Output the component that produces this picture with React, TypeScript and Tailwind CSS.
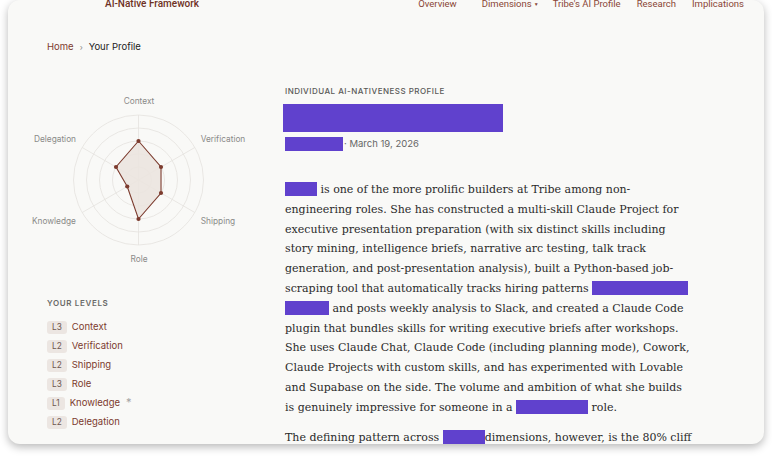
const BROWN = '#7c3b2e';

const AXES = [
  { name: 'Context', level: 3, angle: -90, lx: 109, ly: 12 },
  { name: 'Verification', level: 2, angle: -30, lx: 193, ly: 50 },
  { name: 'Shipping', level: 2, angle: 30, lx: 188, ly: 132 },
  { name: 'Role', level: 3, angle: 90, lx: 109, ly: 170 },
  { name: 'Knowledge', level: 1, angle: 150, lx: 24, ly: 132 },
  { name: 'Delegation', level: 2, angle: 210, lx: 25, ly: 50 },
];

const CX = 108.5;
const CY = 90;
const STEP = 13;

function pt(angle: number, r: number) {
  const a = (angle * Math.PI) / 180;
  return [CX + r * Math.cos(a), CY + r * Math.sin(a)];
}

function Radar() {
  const poly = AXES.map((a) => pt(a.angle, a.level * STEP));
  return (
    <svg width="220" height="180" viewBox="0 0 220 180" className="-ml-[17px] mt-[5px] block">
      {[1, 2, 3, 4, 5].map((k) => (
        <circle key={k} cx={CX} cy={CY} r={k * STEP} fill="none" stroke="#e4e2de" strokeWidth="0.8" />
      ))}
      {AXES.map((a) => {
        const [x, y] = pt(a.angle, 5 * STEP);
        return <line key={a.name} x1={CX} y1={CY} x2={x} y2={y} stroke="#e4e2de" strokeWidth="0.8" />;
      })}
      <polygon
        points={poly.map((p) => p.join(',')).join(' ')}
        fill="#ebe4df"
        fillOpacity="0.9"
        stroke={BROWN}
        strokeWidth="1.1"
      />
      {poly.map((p, i) => (
        <circle key={i} cx={p[0]} cy={p[1]} r="2.1" fill={BROWN} />
      ))}
      {AXES.map((a) => (
        <text
          key={a.name}
          x={a.lx}
          y={a.ly}
          textAnchor="middle"
          dominantBaseline="middle"
          fontSize="8.3"
          fill="#8a8a88"
          fontFamily="Inter, sans-serif"
        >
          {a.name}
        </text>
      ))}
    </svg>
  );
}

function Redact({ w, h = 14 }: { w: number; h?: number }) {
  return <span className="inline-block bg-[#6041cd] align-[-3px]" style={{ width: w, height: h }} />;
}

const LEVELS = [
  { l: 'L3', name: 'Context' },
  { l: 'L2', name: 'Verification' },
  { l: 'L2', name: 'Shipping' },
  { l: 'L3', name: 'Role' },
  { l: 'L1', name: 'Knowledge', star: true },
  { l: 'L2', name: 'Delegation' },
];

export default function App() {
  return (
    <div className="w-[772px] h-[462px] bg-white px-[8px] overflow-hidden">
      <div className="h-[444px] rounded-[12px] bg-[#f9f9f7] shadow-[0_3px_8px_rgba(0,0,0,0.28)] overflow-hidden">
        {/* top nav */}
        <nav className="h-[8px] flex items-center justify-between pl-[97px] pr-[20px] font-['Roboto',sans-serif] text-[10px] leading-[12px]">
          <span className="font-medium text-[#6e3124]">AI-Native Framework</span>
          <div className="flex items-center gap-[16px] text-[9.5px] text-[#8a4636]">
            <span className="mr-[9px]">Overview</span>
            <span className="flex items-center gap-[2px] -mr-[2px]">
              Dimensions<span className="text-[5px]">▼</span>
            </span>
            <span>Tribe's AI Profile</span>
            <span>Research</span>
            <span>Implications</span>
          </div>
        </nav>

        <main className="px-[39px] font-['Inter',sans-serif]">
          <div className="mt-[33px] flex items-center gap-[6px] text-[9.5px] leading-[12px]">
            <span className="text-[#7c3b2e]">Home</span>
            <span className="text-[#888] text-[8px]">›</span>
            <span className="text-[#222]">Your Profile</span>
          </div>

          <div className="mt-[32px] flex">
            {/* left column */}
            <aside className="w-[238px] shrink-0">
              <Radar />
              <div className="mt-[27px] text-[8px] leading-[12px] tracking-[0.08em] font-semibold text-[#6a6a68]">
                YOUR LEVELS
              </div>
              <ul className="mt-[9px]">
                {LEVELS.map((lv) => (
                  <li key={lv.name} className="h-[19px] flex items-center gap-[5px]">
                    <span className="h-[13.5px] px-[5px] rounded-[3px] bg-[#ece6e2] text-[8.3px] leading-[13.5px] text-[#6e5750]">
                      {lv.l}
                    </span>
                    <span className="text-[9.5px] text-[#7c3b2e]">{lv.name}</span>
                    {lv.star && <span className="ml-[1px] -mt-[2px] text-[11px] leading-[11px] text-[#a3a3a3]">*</span>}
                  </li>
                ))}
              </ul>
            </aside>

            {/* right column */}
            <section className="w-[440px]">
              <div className="text-[8px] leading-[12px] tracking-[0.06em] font-medium text-[#5a5a58]">
                INDIVIDUAL AI-NATIVENESS PROFILE
              </div>
              <div className="mt-[7px] -ml-[2px] h-[28px] w-[220px] bg-[#6041cd]" />
              <div className="mt-[5px] flex items-center h-[14px] text-[9.5px] text-[#666]">
                <span className="inline-block h-[14px] w-[58px] bg-[#6041cd]" />
                <span className="ml-[1px]">· March 19, 2026</span>
              </div>

              <div className="mt-[29px] whitespace-nowrap font-['DejaVu_Serif',serif] text-[11px] leading-[19.8px] text-[#2a2a2a]">
                <p>
                  <Redact w={32} /> is one of the more prolific builders at Tribe among non-
                  <br />
                  engineering roles. She has constructed a multi-skill Claude Project for
                  <br />
                  executive presentation preparation (with six distinct skills including
                  <br />
                  story mining, intelligence briefs, narrative arc testing, talk track
                  <br />
                  generation, and post-presentation analysis), built a Python-based job-
                  <br />
                  scraping tool that automatically tracks hiring patterns <Redact w={96} />
                  <br />
                  <Redact w={44} /> and posts weekly analysis to Slack, and created a Claude Code
                  <br />
                  plugin that bundles skills for writing executive briefs after workshops.
                  <br />
                  She uses Claude Chat, Claude Code (including planning mode), Cowork,
                  <br />
                  Claude Projects with custom skills, and has experimented with Lovable
                  <br />
                  and Supabase on the side. The volume and ambition of what she builds
                  <br />
                  is genuinely impressive for someone in a <Redact w={72} /> role.
                </p>
                <p className="mt-[10px]">
                  The defining pattern across <Redact w={42} />dimensions, however, is the 80% cliff
                </p>
              </div>
            </section>
          </div>
        </main>
      </div>
    </div>
  );
}
